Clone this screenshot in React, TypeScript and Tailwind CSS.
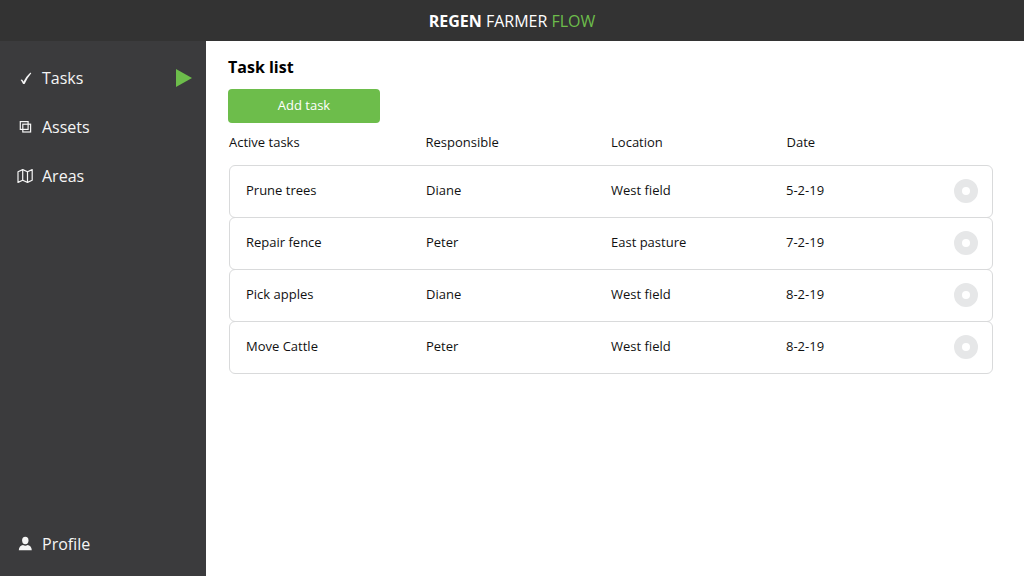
import React, { useState } from 'react';

interface Task {
    id: string;
    name: string;
    responsible: string;
    location: string;
    date: string;
}

interface NavLinkProps {
    href: string;
    label: string;
    icon: React.ReactNode;
    active?: boolean;
}

const TASKS: Task[] = [
    { id: '1', name: 'Prune trees', responsible: 'Diane', location: 'West field', date: '5-2-19' },
    { id: '2', name: 'Repair fence', responsible: 'Peter', location: 'East pasture', date: '7-2-19' },
    { id: '3', name: 'Pick apples', responsible: 'Diane', location: 'West field', date: '8-2-19' },
    { id: '4', name: 'Move Cattle', responsible: 'Peter', location: 'West field', date: '8-2-19' }
];

const CheckIcon = () => (
    <svg viewBox="0 0 18 18" className="w-[18px] h-[18px]" fill="currentColor">
        <path d="M4.6 11.1c.5-.8 1.500-.8 1.900 0l1 1.700c1.500-3.300 3.800-6.500 6.500-8.900.5-.4 1.500-.1 1.100.5-2.600 3.100-4.600 6.500-6.200 10-.4.800-1.700.8-2.100 0-.7-1.200-1.300-2.200-2.200-3.300z" />
    </svg>
);

const CopyIcon = () => (
    <svg viewBox="0 0 18 18" className="w-[18px] h-[18px]" fill="none" stroke="currentColor" strokeWidth="1.2">
        <rect x="4.3" y="3.6" width="7.8" height="7.8" />
        <rect x="6.8" y="6.2" width="7.8" height="7.8" />
    </svg>
);

const MapIcon = () => (
    <svg viewBox="0 0 18 18" className="w-[18px] h-[18px]" fill="none" stroke="currentColor" strokeWidth="1.2" strokeLinejoin="round">
        <path d="M2 4.700 6.700 2.600 11.500 4.700 16.200 2.600V13.300L11.500 15.400 6.700 13.300 2 15.400z" />
        <path d="M6.700 2.600V13.300M11.500 4.700V15.400" />
    </svg>
);

const UserIcon = () => (
    <svg viewBox="0 0 18 18" className="w-[18px] h-[18px]" fill="currentColor">
        <ellipse cx="9.3" cy="5.5" rx="3.2" ry="3.7" />
        <path d="M2.800 15.300c0-3.300 2-4.800 4.200-5.300 1.400.9 3.200.9 4.600 0 2.200.5 4.200 2 4.200 5.300z" />
    </svg>
);

const NavLink: React.FC<NavLinkProps> = ({ href, label, icon, active }) => (
    <a href={href} className="flex items-center gap-2 text-base text-[#f5f5f5]" aria-current={active ? 'page' : undefined}>
        {icon}
        {label}
        {active && (
            <svg viewBox="0 0 16 18" className="w-4 h-[18px] ml-auto fill-[#6dbd4b]" aria-hidden="true">
                <path d="M0 0 16 9 0 18z" />
            </svg>
        )}
    </a>
);

const TaskTable: React.FC = () => {
    const [done, setDone] = useState<string[]>([]);

    const toggle = (id: string) => {
        setDone(done.includes(id) ? done.filter(d => d !== id) : [...done, id]);
    };

    return (
        <table className="block text-[13px] leading-5 text-left text-[#111111]">
            <thead className="block">
                <tr className="grid grid-cols-[196fr_185fr_175fr_168fr_38px] pt-[9px] pb-[13px]">
                    <th className="font-normal">Active tasks</th>
                    <th className="font-normal">Responsible</th>
                    <th className="font-normal">Location</th>
                    <th className="font-normal">Date</th>
                    <td></td>
                </tr>
            </thead>
            <tbody className="block pt-px">
                {TASKS.map(task => (
                    <tr
                        key={task.id}
                        className="grid grid-cols-[196fr_185fr_175fr_168fr_38px] items-center h-[53px] pb-0.5 -mt-px border border-[#d9dadb] rounded-md"
                    >
                        <td className="pl-4 pb-0.5">{task.name}</td>
                        <td className="pb-0.5">{task.responsible}</td>
                        <td className="pb-0.5">{task.location}</td>
                        <td className="pb-0.5">{task.date}</td>
                        <td className="flex">
                            <input
                                type="checkbox"
                                aria-label={`Complete ${task.name}`}
                                checked={done.includes(task.id)}
                                onChange={() => toggle(task.id)}
                                className="appearance-none w-6 h-6 rounded-full border-8 border-[#e6e7e8] bg-white checked:bg-[#6dbd4b]"
                            />
                        </td>
                    </tr>
                ))}
            </tbody>
        </table>
    );
};

export default function App() {
    return (
        <div className="min-h-screen flex flex-col bg-white font-['Open_Sans',sans-serif]">
            <header className="bg-[#333333] text-white text-base text-center pt-[9px] pb-2">
                <span className="font-bold">REGEN</span> FARMER <span className="text-[#6dbd4b]">FLOW</span>
            </header>

            <div className="flex flex-1">
                <nav className="w-[206px] shrink-0 flex flex-col gap-[25px] bg-[#3b3b3d] pl-4 pr-[14px] pt-[25px] pb-5">
                    <NavLink href="#tasks" label="Tasks" icon={<CheckIcon />} active />
                    <NavLink href="#assets" label="Assets" icon={<CopyIcon />} />
                    <NavLink href="#areas" label="Areas" icon={<MapIcon />} />
                    <div className="mt-auto">
                        <NavLink href="#profile" label="Profile" icon={<UserIcon />} />
                    </div>
                </nav>

                <main className="flex-1 pl-[22px] pr-[30px] pt-[14px]">
                    <h1 className="text-base font-bold text-black">Task list</h1>
                    <button type="button" className="block w-[152px] h-[34px] mt-[10px] rounded bg-[#6dbd4b] text-[13px] text-white">
                        Add task
                    </button>
                    <div className="px-px">
                        <TaskTable />
                    </div>
                </main>
            </div>
        </div>
    );
}
